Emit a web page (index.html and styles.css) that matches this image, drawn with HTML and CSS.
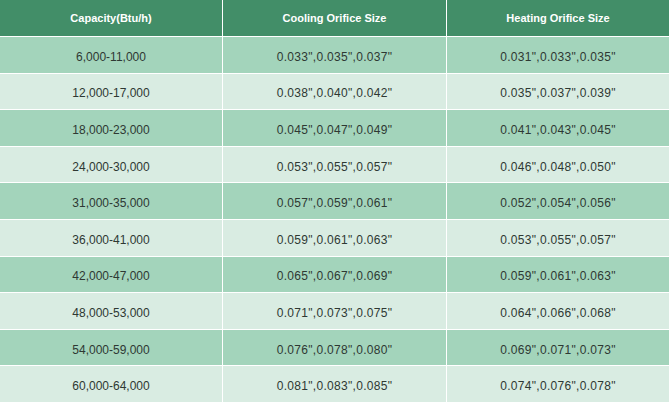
FILE: index.html
```html
<!DOCTYPE html>
<html>
<head>
<meta charset="utf-8">
<link rel="stylesheet" href="styles.css">
</head>
<body>
<div class="table">
  <div class="cell head">Capacity(Btu/h)</div>
  <div class="cell head">Cooling Orifice Size</div>
  <div class="cell head">Heating Orifice Size</div>

  <div class="cell odd">6,000-11,000</div>
  <div class="cell odd val">0.033",0.035",0.037"</div>
  <div class="cell odd val">0.031",0.033",0.035"</div>

  <div class="cell even">12,000-17,000</div>
  <div class="cell even val">0.038",0.040",0.042"</div>
  <div class="cell even val">0.035",0.037",0.039"</div>

  <div class="cell odd">18,000-23,000</div>
  <div class="cell odd val">0.045",0.047",0.049"</div>
  <div class="cell odd val">0.041",0.043",0.045"</div>

  <div class="cell even">24,000-30,000</div>
  <div class="cell even val">0.053",0.055",0.057"</div>
  <div class="cell even val">0.046",0.048",0.050"</div>

  <div class="cell odd">31,000-35,000</div>
  <div class="cell odd val">0.057",0.059",0.061"</div>
  <div class="cell odd val">0.052",0.054",0.056"</div>

  <div class="cell even">36,000-41,000</div>
  <div class="cell even val">0.059",0.061",0.063"</div>
  <div class="cell even val">0.053",0.055",0.057"</div>

  <div class="cell odd">42,000-47,000</div>
  <div class="cell odd val">0.065",0.067",0.069"</div>
  <div class="cell odd val">0.059",0.061",0.063"</div>

  <div class="cell even">48,000-53,000</div>
  <div class="cell even val">0.071",0.073",0.075"</div>
  <div class="cell even val">0.064",0.066",0.068"</div>

  <div class="cell odd">54,000-59,000</div>
  <div class="cell odd val">0.076",0.078",0.080"</div>
  <div class="cell odd val">0.069",0.071",0.073"</div>

  <div class="cell even">60,000-64,000</div>
  <div class="cell even val">0.081",0.083",0.085"</div>
  <div class="cell even val">0.074",0.076",0.078"</div>
</div>
</body>
</html>
```
FILE: styles.css
```css
html, body {
  margin: 0;
  padding: 0;
  background: #ffffff;
}
.table {
  display: grid;
  grid-template-columns: 222px 223px 222px;
  grid-template-rows: 36px repeat(10, 1fr);
  gap: 1px;
  width: 669px;
  height: 402px;
  background: #ffffff;
  font-family: "Liberation Sans", Arial, sans-serif;
}
.cell {
  display: flex;
  align-items: center;
  justify-content: center;
  font-size: 12px;
  color: #2e3833;
  padding-top: 4px;
  box-sizing: border-box;
}
.val {
  letter-spacing: 0.3px;
}
.head {
  background: #428e68;
  color: #ffffff;
  font-weight: bold;
  font-size: 11px;
  padding-top: 0;
}
.odd {
  background: #a3d4bb;
}
.even {
  background: #d9ece2;
}
```
